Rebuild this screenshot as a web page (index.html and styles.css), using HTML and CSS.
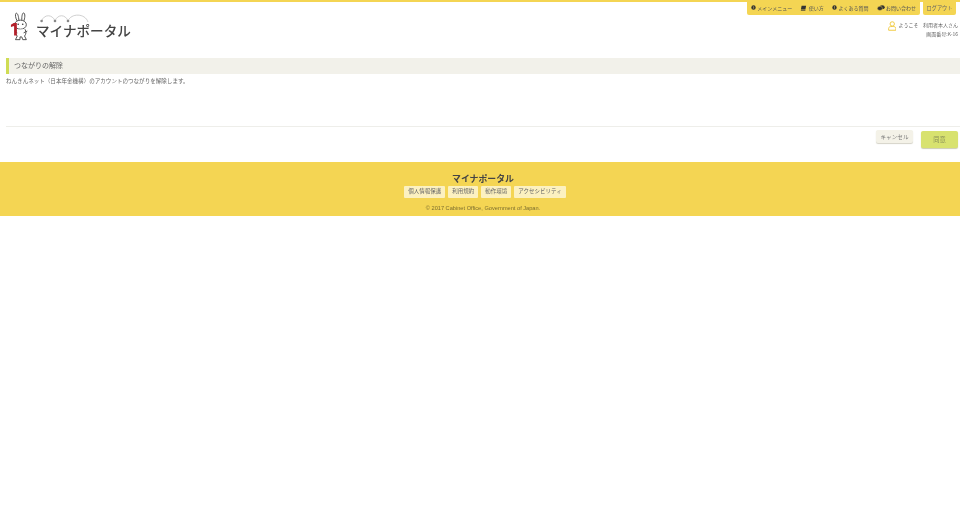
FILE: index.html
```html
<!DOCTYPE html>
<html lang="ja">
<head>
<meta charset="utf-8">
<title>マイナポータル</title>
<link rel="stylesheet" href="styles.css">
</head>
<body>
<header class="header">
  <a class="logo">
    <svg class="logo-rabbit" width="20" height="29" viewBox="0 0 22 32">
      <path d="M8 10C6 7 5.500 3 6.500 1.500C8 .5 9.500 4 9.800 9.500M13 9.500C12.800 5 13.500 1 15 1C17 1.500 16.500 7 15 10.500" fill="#fff" stroke="#444" stroke-width="1"/>
      <ellipse cx="11.500" cy="14" rx="6.500" ry="5" fill="#fff" stroke="#444"/>
      <path d="M7 19.500C6 23 6 25 8 26.500L6 30.500H11V27.500H13L14 30.500H18L16 26.500C18 24 18 22 16.500 19M5 21L8 23M19 21L15 23" fill="#fff" stroke="#444"/>
      <circle cx="9" cy="13.500" r=".9" fill="#333"/><circle cx="14" cy="13.500" r=".9" fill="#333"/>
      <path d="M4 12H7.500V26H4.500V15.500L1 16.500V14Z" fill="#b3202a"/>
    </svg>
    <span class="logo-wordmark">
      <svg class="logo-arcs" width="53" height="14" viewBox="0 0 53 14">
        <path d="M4.600 9C7 2 15.500 2 18 9C20.500 2 28.500 2 31 9C34 1 48 1 51 10" fill="none" stroke="#bbb" stroke-width=".7"/>
        <circle cx="4.600" cy="9" r="1.300" fill="#888"/><circle cx="18" cy="9" r="1.300" fill="#888"/><circle cx="31" cy="9" r="1.300" fill="#888"/>
      </svg>
      <span class="logo-text">マイナポータル</span>
    </span>
  </a>
  <div class="header-right">
    <nav class="topnav">
      <ul class="menu">
        <li class="menu-item"><svg class="ico" viewBox="0 0 8 8"><circle cx="4" cy="4" r="3.500" fill="#333"/><path d="M3 2.200L5 4L3 5.800" stroke="#f4d553" fill="none"/></svg>メインメニュー</li>
        <li class="menu-item"><svg class="ico ico-book" viewBox="0 0 9 8"><path d="M2 1H8L7 6H1Z" fill="#333"/><path d="M1 6.500H7V7.500H1Z" fill="#333"/></svg>使い方</li>
        <li class="menu-item"><svg class="ico" viewBox="0 0 8 8"><circle cx="4" cy="4" r="3.500" fill="#333"/><rect x="3.500" y="2" width="1" height="2.500" fill="#f4d553"/><rect x="3.500" y="5" width="1" height="1" fill="#f4d553"/></svg>よくある質問</li>
        <li class="menu-item"><svg class="ico ico-chat" viewBox="0 0 10 8"><ellipse cx="6.500" cy="3" rx="3.500" ry="2.800" fill="#333"/><ellipse cx="3.500" cy="4.500" rx="3.400" ry="2.800" fill="#333" stroke="#f4d553" stroke-width=".6"/></svg>お問い合わせ</li>
      </ul>
      <a class="logout">ログアウト</a>
    </nav>
    <div class="user">
      <svg class="user-ico" width="9" height="10" viewBox="0 0 9 10"><circle cx="4.500" cy="2.800" r="2.300" fill="none" stroke="#f0c93c" stroke-width="1"/><path d="M.7 9.500V7.500C.7 6 2 5.500 4.500 5.500S8.300 6 8.300 7.500V9.500Z" fill="none" stroke="#f0c93c"/></svg>
      <span class="welcome">ようこそ</span>
      <div class="user-info">
        <div>利用者本人さん</div>
        <div>画面番号:K-16</div>
      </div>
    </div>
  </div>
</header>
<main class="main">
  <h1 class="title">つながりの解除</h1>
  <p class="lead">ねんきんネット（日本年金機構）のアカウントのつながりを解除します。</p>
  <div class="actions">
    <button class="btn-cancel" type="button">キャンセル</button>
    <button class="btn-agree" type="button">同意</button>
  </div>
</main>
<footer class="footer">
  <div class="footer-title">マイナポータル</div>
  <ul class="footer-links">
    <li class="footer-link">個人情報保護</li>
    <li class="footer-link">利用規約</li>
    <li class="footer-link">動作環境</li>
    <li class="footer-link">アクセシビリティ</li>
  </ul>
  <div class="copyright">© 2017 Cabinet Office, Government of Japan.</div>
</footer>
</body>
</html>
```
FILE: styles.css
```css
* { box-sizing: border-box; }
html, body { margin: 0; padding: 0; }
body {
  background: #fff;
  color: #555;
  font-family: "Noto Sans CJK JP", "Liberation Sans", sans-serif;
  font-size: 5px;
  border-top: 2px solid #f4d553;
  filter: blur(.3px);
}
.header {
  display: flex;
  justify-content: space-between;
  height: 56px;
}
.logo {
  display: flex;
  align-items: flex-start;
  padding: 10px 0 0 10px;
}
.logo-rabbit { display: block; }
.logo-wordmark {
  display: flex;
  flex-direction: column;
  margin: 0 0 0 6px;
}
.logo-arcs { display: block; margin-left: 1px; margin-bottom: -5px; }
.logo-text {
  font-size: 13.600px;
  font-weight: 500;
  line-height: 18px;
  color: #444;
}
.header-right {
  display: flex;
  flex-direction: column;
  align-items: flex-end;
  padding-right: 2px;
}
.topnav { display: flex; gap: 3px; margin-right: 2px; }
.menu {
  display: flex;
  align-items: center;
  gap: 8.100px;
  list-style: none;
  margin: 0;
  padding: 0 4px 1.500px;
  height: 12.500px;
  background: #f4d553;
  border-radius: 0 0 2px 2px;
}
.menu-item {
  display: flex;
  align-items: center;
  gap: 1.500px;
  white-space: nowrap;
  color: #555;
  line-height: 11px;
  font-size: 5px;
}
.ico { width: 5px; height: 5px; }
.ico-book { width: 7px; height: 6px; }
.ico-chat { width: 8px; height: 6px; }
.logout {
  display: flex;
  align-items: center;
  padding: 0 3.500px 2px;
  height: 12.500px;
  background: #f4d553;
  color: #666;
  border-radius: 0 0 2px 2px;
  font-size: 5.200px;
}
.user {
  display: flex;
  align-items: flex-start;
  margin-top: 4.500px;
  color: #666;
  font-size: 5px;
}
.user-ico { margin-top: 1.500px; width: 8.500px; height: 10px; }
.welcome { margin: 1.500px 4.500px 0 2px; line-height: 8px; }
.user-info { text-align: right; line-height: 9px; margin-top: 1px; }
.main { padding-left: 6px; }
.title {
  margin: 0;
  height: 16px;
  padding-left: 5px;
  background: #f2f1ea;
  border-left: 3px solid #cfdc54;
  color: #666;
  font-size: 7px;
  font-weight: 400;
  line-height: 15px;
}
.lead {
  margin: 0;
  height: 52px;
  padding-top: 3px;
  color: #666;
  font-size: 5.560px;
  line-height: 9px;
}
.actions {
  display: flex;
  justify-content: flex-end;
  align-items: flex-start;
  gap: 8px;
  height: 36px;
  padding: 3px 2px 0 0;
  border-top: 1px solid #eeeeea;
}
.btn-cancel {
  height: 13px;
  width: 37px;
  padding: 0;
  border: 0;
  border-radius: 2px;
  background: #f4f2e8;
  box-shadow: 0 1px 1px #d5d3c8;
  color: #777;
  font: inherit;
  font-size: 5.600px;
}
.btn-agree {
  height: 17px;
  width: 37px;
  margin-top: 1px;
  padding: 0;
  border: 0;
  border-radius: 2px;
  background: #d8e26f;
  box-shadow: 0 1px 1px #cdcdb0;
  color: #8a9058;
  font: inherit;
  font-size: 6.300px;
}
.footer {
  height: 54px;
  padding: 10px 0 0 6px;
  background: #f4d553;
  text-align: center;
}
.footer-title {
  color: #444;
  font-size: 8.900px;
  font-weight: 700;
  line-height: 13px;
}
.footer-links {
  display: flex;
  justify-content: center;
  gap: 3px;
  list-style: none;
  margin: 1px 0 0;
  padding: 0 0 0 4px;
}
.footer-link {
  padding: 0 4px;
  height: 12px;
  line-height: 10.500px;
  background: #fcf1c0;
  border-radius: 1px;
  color: #666;
  font-size: 5.500px;
}
.copyright {
  margin-top: 6px;
  color: #7d6f30;
  font-family: "Liberation Sans", sans-serif;
  font-size: 5.650px;
  line-height: 9px;
}
```
